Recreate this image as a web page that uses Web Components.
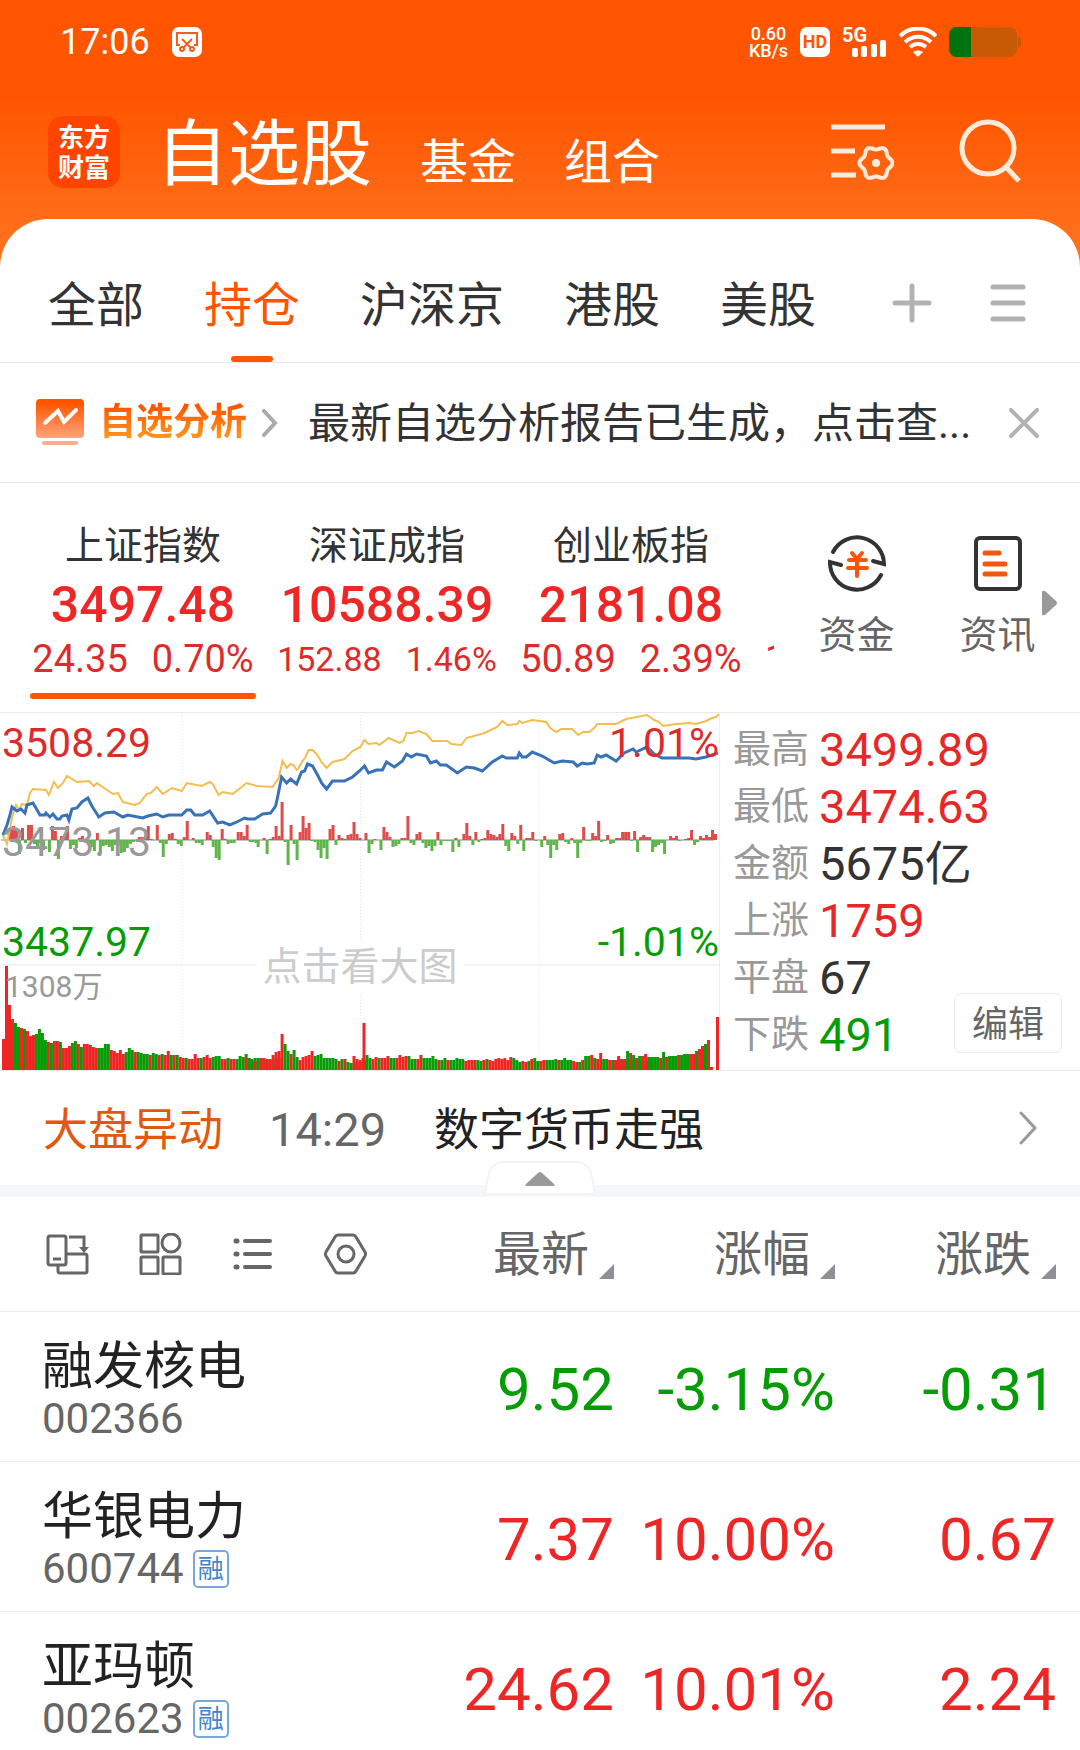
<!DOCTYPE html>
<html lang="zh-CN">
<head>
<meta charset="utf-8">
<meta name="viewport" content="width=device-width, initial-scale=1">
<title>自选股</title>
<style>
  html, body {
    margin: 0;
    height: 100%;
    background: #fff;
  }

  body {
    font-family: Roboto, "Noto Sans CJK SC", sans-serif;
    color: #333;
    --brand: #ff5500;
    --up: #ee2626;
    --down: #069c06;
    --line: #e9e9e9;
    --muted: #666;
    --faint: #999;
  }
</style>
</head>
<body>
<watch-app></watch-app>

<script>
const RESET = `
  *, *::before, *::after { box-sizing: border-box; }
  button, a {
    margin: 0;
    padding: 0;
    border: 0;
    background: none;
    font: inherit;
    color: inherit;
    text-decoration: none;
    cursor: pointer;
    white-space: nowrap;
  }
  svg { display: block; flex-shrink: 0; }
`;

class BaseElement extends HTMLElement {
  constructor() {
    super();
    this.attachShadow({ mode: 'open' });
  }

  connectedCallback() {
    this.shadowRoot.innerHTML = `<style>${RESET}${this.styles()}</style>${this.markup()}`;
  }

  styles() { return ':host { display: block; }'; }

  markup() { return '<slot></slot>'; }
}

class StatusBar extends BaseElement {
  styles() {
    return `
      :host {
        display: flex;
        align-items: center;
        justify-content: space-between;
        height: 84px;
        padding: 0 59px 0 60px;
        color: #fff;
      }
      .side { display: flex; align-items: center; }
      .left { gap: 22px; }
      .right { gap: 12px; }
      time { font-size: 36px; line-height: 44px; }
      .speed {
        font-size: 18px;
        line-height: 17px;
        font-weight: 500;
        text-align: center;
      }
      .hd {
        width: 30px;
        height: 30px;
        border-radius: 7px;
        background: #fff;
        color: var(--brand);
        font-size: 18px;
        font-weight: 700;
        line-height: 30px;
        text-align: center;
      }
      .signal { position: relative; width: 45px; height: 30px; }
      .signal span {
        position: absolute;
        top: 0;
        left: 0;
        font-size: 20px;
        font-weight: 700;
        line-height: 16px;
      }
    `;
  }

  markup() {
    return `
      <div class="side left">
        <time>17:06</time>
        <svg width="30" height="30" viewBox="0 0 30 30" fill="none" stroke="#f0601c" stroke-width="2">
          <rect width="30" height="30" rx="7" fill="#fff" stroke="none"/>
          <path d="M8 18H5V6h20v12h-3"/>
          <path d="M10 12l9 9M20 12l-9 9"/>
          <circle cx="10" cy="22" r="2"/>
          <circle cx="20" cy="22" r="2"/>
        </svg>
      </div>
      <div class="side right">
        <div class="speed">0.60<br>KB/s</div>
        <div class="hd">HD</div>
        <div class="signal">
          <span>5G</span>
          <svg width="45" height="30" viewBox="0 0 45 30" fill="#fff">
            <rect x="10" y="21" width="6" height="9" rx="2"/>
            <rect x="19" y="19" width="6" height="11" rx="2"/>
            <rect x="29" y="17" width="6" height="13" rx="2"/>
            <rect x="38" y="13" width="6" height="17" rx="2"/>
          </svg>
        </div>
        <svg width="38" height="30" viewBox="0 0 38 30" fill="none" stroke="#fff" stroke-width="4">
          <path d="M1 9C11-1 27-1 37 9"/>
          <path d="M6 15c8-7 18-7 26 0"/>
          <path d="M11 20c5-4 11-4 16 0"/>
          <path d="M19 30l-5-5c3-2 7-2 10 0z" fill="#fff" stroke="none"/>
        </svg>
        <svg width="72" height="30" viewBox="0 0 72 30">
          <rect width="68" height="30" rx="8" fill="#c85a06"/>
          <path d="M22 0H8a8 8 0 0 0-8 8v14a8 8 0 0 0 8 8h14z" fill="#00720e"/>
          <path d="M69 9q3 1 3 3v6q0 2-3 3z" fill="#c85a06"/>
        </svg>
      </div>
    `;
  }
}

class AppHeader extends BaseElement {
  styles() {
    return `
      :host {
        display: flex;
        align-items: center;
        height: 135px;
        padding: 0 59px 0 48px;
        color: #fff;
      }
      .logo {
        width: 72px;
        height: 72px;
        margin-right: 36px;
        border-radius: 15px;
        background: #ff4400;
        font-family: "Noto Sans CJK SC", sans-serif;
        font-size: 26px;
        font-weight: 700;
        line-height: 30px;
        padding-top: 5px;
        text-align: center;
      }
      nav {
        display: flex;
        align-items: baseline;
        gap: 48px;
        padding-top: 15px;
        font-size: 48px;
        line-height: 72px;
      }
      nav .current { font-size: 72px; }
      .tools {
        display: flex;
        align-items: center;
        gap: 65px;
        margin-left: auto;
      }
    `;
  }

  // six-lobed outline of the settings gear
  gearPath(cx, cy) {
    const pts = [];
    for (let i = 0; i < 72; i++) {
      const a = i * Math.PI / 36;
      const r = 15 + 1.6 * Math.cos(6 * a);
      pts.push(`${(cx + r * Math.cos(a)).toFixed(1)} ${(cy + r * Math.sin(a)).toFixed(1)}`);
    }
    return `M${pts.join('L')}Z`;
  }

  markup() {
    return `
      <div class="logo">东方<br>财富</div>
      <nav>
        <a href="#stocks" class="current">自选股</a>
        <a href="#funds">基金</a>
        <a href="#groups">组合</a>
      </nav>
      <div class="tools">
        <button aria-label="设置">
          <svg width="64" height="60" viewBox="0 0 64 60" fill="none" stroke="#ffeada" stroke-width="5">
            <path d="M1 5h54M1 29h24M1 53h25"/>
            <path d="${this.gearPath(46, 41)}" stroke-width="4"/>
            <circle cx="46" cy="41" r="4" fill="#ffeada" stroke="none"/>
          </svg>
        </button>
        <button aria-label="搜索">
          <svg width="62" height="66" viewBox="0 0 62 66" fill="none" stroke="#ffeada" stroke-width="5">
            <circle cx="29" cy="29" r="26"/>
            <path d="M47 48l13 14"/>
          </svg>
        </button>
      </div>
    `;
  }
}

class MarketTabs extends BaseElement {
  styles() {
    return `
      :host {
        display: flex;
        align-items: stretch;
        height: 144px;
        padding: 0 54px 0 48px;
        border-bottom: 1px solid var(--line);
      }
      .tabs { display: flex; gap: 60px; }
      .tabs button {
        position: relative;
        padding-top: 31px;
        font-size: 48px;
        line-height: 60px;
      }
      .tabs .active { color: var(--brand); }
      .tabs .active::after {
        content: "";
        position: absolute;
        left: 50%;
        bottom: 0;
        width: 42px;
        height: 6px;
        margin-left: -21px;
        border-radius: 3px;
        background: var(--brand);
      }
      .tools {
        display: flex;
        align-items: center;
        gap: 58px;
        margin-left: auto;
        padding-top: 24px;
      }
    `;
  }

  markup() {
    const tabs = ['全部', '持仓', '沪深京', '港股', '美股'];
    return `
      <div class="tabs">
        ${tabs.map(t => `<button class="${t === '持仓' ? 'active' : ''}">${t}</button>`).join('')}
      </div>
      <div class="tools">
        <button aria-label="添加分组">
          <svg width="40" height="40" viewBox="0 0 40 40" stroke="#b2b2b2" stroke-width="5" stroke-linecap="round">
            <path d="M3 20h34M20 3v34"/>
          </svg>
        </button>
        <button aria-label="分组管理">
          <svg width="36" height="38" viewBox="0 0 36 38" stroke="#b2b2b2" stroke-width="5" stroke-linecap="round">
            <path d="M3 3h30M3 19h30M3 35h30"/>
          </svg>
        </button>
      </div>
    `;
  }
}

class ReportNotice extends BaseElement {
  styles() {
    return `
      :host {
        display: flex;
        align-items: center;
        height: 120px;
        padding: 0 41px 0 36px;
        border-bottom: 1px solid var(--line);
      }
      .tag { display: flex; align-items: center; gap: 15px; }
      .tag b {
        font-size: 37px;
        line-height: 48px;
        background: linear-gradient(#ff5500 15%, #ff9a20 85%);
        -webkit-background-clip: text;
        background-clip: text;
        color: transparent;
      }
      p {
        flex: 1;
        min-width: 0;
        margin: 0 24px 0 30px;
        padding-top: 2px;
        font-size: 42px;
        line-height: 60px;
        white-space: nowrap;
        overflow: hidden;
      }
    `;
  }

  markup() {
    return `
      <a class="tag" href="#analysis">
        <svg width="48" height="48" viewBox="0 0 48 48" fill="none">
          <defs>
            <linearGradient id="g" x2="0" y2="1">
              <stop offset=".1" stop-color="#ff5500"/>
              <stop offset="1" stop-color="#ffa47c"/>
            </linearGradient>
          </defs>
          <rect width="48" height="39" rx="4" fill="url(#g)"/>
          <rect x="6" y="42" width="36" height="4" rx="2" fill="#ffac88"/>
          <path d="M9 24l13-12 6 11 12-12" stroke="#fff" stroke-width="4" stroke-linecap="round"/>
        </svg>
        <b>自选分析</b>
        <svg width="16" height="28" viewBox="0 0 16 28" fill="none" stroke="#aaa" stroke-width="4" stroke-linecap="round">
          <path d="M2 2l11 12L2 26"/>
        </svg>
      </a>
      <p><slot></slot></p>
      <button aria-label="关闭">
        <svg width="30" height="30" viewBox="0 0 30 30" stroke="#b2b2b2" stroke-width="4" stroke-linecap="round">
          <path d="M2 2l26 26M28 2L2 28"/>
        </svg>
      </button>
    `;
  }
}

class IndexQuote extends BaseElement {
  styles() {
    return `
      :host {
        display: block;
        flex: 0 0 244px;
        padding: 0 9px;
        text-align: center;
        white-space: nowrap;
      }
      .name { font-size: 39px; line-height: 46px; height: 46px; }
      .value {
        font-size: 50px;
        font-weight: 500;
        line-height: 72px;
        height: 72px;
        color: var(--up);
      }
      .change {
        display: flex;
        justify-content: center;
        gap: 24px;
        margin-bottom: 16px;
        font-size: 38px;
        line-height: 36px;
        color: #dd2b2b;
      }
      :host([compact]) .change { font-size: 34px; }
      :host([partial]) { padding-left: 12px; }
      :host([partial]) .change { justify-content: flex-start; }
      :host([active])::after {
        content: "";
        display: block;
        height: 6px;
        border-radius: 3px;
        background: var(--brand);
      }
    `;
  }

  markup() {
    const get = name => this.getAttribute(name) || '';
    return `
      <div class="name">${get('name')}</div>
      <div class="value">${get('value')}</div>
      <div class="change"><span>${get('change')}</span><span>${get('percent')}</span></div>
    `;
  }
}

class QuickLink extends BaseElement {
  styles() {
    return `
      :host { display: block; flex: 0 0 141px; }
      a {
        display: flex;
        flex-direction: column;
        align-items: center;
        gap: 18px;
        font-size: 38px;
        line-height: 48px;
        color: var(--muted);
      }
    `;
  }

  markup() {
    return `<a href="#${this.getAttribute('target')}"><slot name="icon"></slot><slot></slot></a>`;
  }
}

class IndexStrip extends BaseElement {
  styles() {
    return `
      :host {
        display: flex;
        height: 230px;
        border-bottom: 1px solid var(--line);
      }
      .quotes {
        flex: 1;
        min-width: 0;
        display: flex;
        overflow: hidden;
        padding: 40px 0 0 21px;
      }
      .links {
        position: relative;
        display: flex;
        width: 306px;
        padding: 50px 0 0 12px;
      }
      .more {
        position: absolute;
        top: 107px;
        right: 23px;
      }
    `;
  }

  markup() {
    return `
      <div class="quotes">
        <index-quote active name="上证指数" value="3497.48" change="24.35" percent="0.70%"></index-quote>
        <index-quote compact name="深证成指" value="10588.39" change="152.88" percent="1.46%"></index-quote>
        <index-quote name="创业板指" value="2181.08" change="50.89" percent="2.39%"></index-quote>
        <index-quote partial change="1"></index-quote>
      </div>
      <div class="links">
        <quick-link target="capital">
          <svg slot="icon" width="60" height="60" viewBox="0 0 60 60" fill="none" stroke="#333" stroke-width="4" stroke-linecap="round">
            <path d="M6 19A27 27 0 0 1 57 31l-11-3"/>
            <path d="M54 42A27 27 0 0 1 3 29l11 3"/>
            <path d="M25 20l5 6 5-6M22 27h17M21 35h19M30 27v16" stroke="#ff5500"/>
          </svg>
          资金
        </quick-link>
        <quick-link target="news">
          <svg slot="icon" width="60" height="60" viewBox="0 0 60 60" fill="none" stroke="#333" stroke-width="4" stroke-linecap="round">
            <rect x="8" y="5" width="44" height="51" rx="4"/>
            <path d="M17 20h14M17 31h20M17 41h20" stroke="#f5560e" stroke-width="5"/>
          </svg>
          资讯
        </quick-link>
        <button class="more" aria-label="更多">
          <svg width="16" height="26" viewBox="0 0 16 26" fill="#999">
            <path d="M1 2q0-2 3-1l11 10q2 2 0 4L4 25q-3 1-3-1z"/>
          </svg>
        </button>
      </div>
    `;
  }
}

const PRICE = `3,122 7,112 10,102 12,94 17,98 21,96 25,100 27,92 33,90 36,95 40,102 45,102 46,100 50,104
  53,101 57,106 60,106 62,103 67,102 69,107 72,96 77,95 82,89 88,85 92,93 99,104 105,100 114,99 123,104
  128,102 143,105 148,103 157,101 163,104 169,102 182,102 187,97 191,97 195,102 203,102 210,98 218,110
  223,109 230,112 235,110 245,105 248,106 255,106 263,101 271,100 276,93 278,84 282,64 287,70 291,66
  297,71 302,59 305,58 308,51 313,53 318,62 322,70 327,76 333,68 345,68 353,64 360,58 365,53 369,60
  377,57 383,57 387,49 395,54 403,48 407,41 412,44 417,41 427,43 431,50 437,48 441,52 447,52 458,60
  467,54 475,55 483,58 493,49 503,43 507,45 518,45 520,40 523,44 527,44 533,39 543,43 555,50 563,48
  574,49 578,53 583,50 588,51 595,50 598,42 602,44 607,42 617,48 625,40 634,36 637,39 648,34 655,41
  663,45 690,45 697,46 707,44 719,40`;

const AVERAGE = `3,122 7,131 12,105 16,92 19,97 22,91 27,92 30,80 33,76 46,77 49,82 54,69 58,75 63,70 67,63
  77,69 89,68 94,73 97,70 113,81 118,80 123,89 135,92 140,90 147,81 151,80 157,74 163,81 172,75 182,78
  187,70 202,73 210,69 213,71 219,82 223,79 233,81 247,70 257,73 273,74 279,65 283,48 287,55 291,51
  294,52 297,57 299,55 303,48 306,44 309,37 313,37 317,41 322,49 327,55 333,49 345,46 353,38 361,34
  365,27 369,31 377,30 380,32 389,25 400,30 404,28 407,20 413,20 419,18 427,21 433,28 448,28 452,31
  462,32 467,25 485,20 498,14 503,8 508,12 518,11 520,8 523,10 533,7 547,9 551,15 557,19 562,16 573,16
  579,22 584,19 590,19 595,15 598,11 617,11 627,6 648,2 655,7 660,9 664,13 677,11 690,10 697,11 707,8
  713,5 717,4 720,1`;

// x:height, positive bars rise above the zero line
const MOMENTUM = `9:10 12:14 15:12 18:-14 21:12 24:-3 27:15 30:15 33:-4 36:-8 39:-3 42:-10 48:-12 51:14 54:9
  57:-19 60:4 63:3 66:14 69:-9 72:-5 75:-8 78:2 81:4 84:-2 87:-3 90:-7 93:-11 96:7 99:-13 102:-6 105:-5
  108:-7 111:-11 114:-5 117:-6 120:-13 123:-12 126:-8 129:-4 132:-2 135:-1 138:3 141:3 144:3 147:14 150:1
  156:15 159:-3 162:-17 165:-4 168:6 171:7 174:1 177:-4 180:-6 183:3 186:19 192:2 195:-3 198:-3 201:-5
  206:8 209:5 212:-7 215:-18 218:-20 221:11 224:1 227:-4 230:-3 233:-3 237:8 240:8 243:4 246:15 249:-2
  252:-2 255:-3 257:-7 263:2 266:-14 269:1 272:3 275:14 278:4 281:38 284:-2 287:-25 290:15 293:-4 296:-20
  299:8 302:24 305:12 308:17 311:-1 314:-2 317:-10 320:-18 323:-8 326:-19 329:11 332:15 335:-5 338:5
  341:2 344:1 347:5 350:6 353:18 356:6 359:2 365:7 368:-13 371:-4 374:1 380:-10 383:13 386:8 389:3 392:-7
  395:-6 398:-4 401:2 404:2 407:24 410:-3 413:-5 416:6 419:8 422:-3 425:-8 428:-6 431:-11 434:-6 437:8
  440:-5 443:-1 446:-1 449:-1 452:-12 455:2 458:-7 463:6 466:17 469:4 472:-5 475:8 478:-2 481:1 484:2
  487:10 490:6 493:5 496:3 499:6 502:16 505:-6 508:-11 511:7 514:4 517:-4 520:15 523:-11 526:2 529:2
  532:8 535:-1 541:-7 544:4 547:-5 550:-18 553:-5 556:-10 559:6 562:7 565:-2 568:-4 571:2 574:-3 577:-18
  580:-3 583:13 586:-1 589:-1 592:7 595:4 598:19 601:-2 604:-1 607:5 610:-4 613:-3 616:2 619:2 622:8
  625:8 628:8 631:-1 634:9 637:-12 640:3 643:5 646:3 649:3 652:-12 655:-7 658:-5 661:-3 664:-14 670:4
  673:2 676:4 679:-1 685:1 688:2 691:10 694:-5 697:-2 700:4 703:2 706:5 709:3 712:10 715:6`;

// runs of volume bars: start x, then one entry per minute (r = up, g = down)
const VOLUME = [
  [3, `r31 r104 r65 r51 g47 g43 r42 g41 r39 r34 r35 g36 g41 g37 g30 r28 g27 r29 r29 g28 r22 r22 r24 g27 g29
    r26 g23 r26 r26 r25 r23 r22 g22 g22 g26 g26 r20 r19 r17 r20 r16 g18 g22 g20 r18 g18 g17 g16 g16 r15 g17
    g16 r15 g16 r15 r19 g15 r15 g15 r13 r12 g12 r11 r11 r16 r12 g12 r13 r15 r12 g13 g14 g14 r11 r11 g12 r11
    r11 g11 g14 g13 g16 r12 g11 g12 g12 g11 r10 r10 r10 r9 r10`],
  [246, 'r12 g12 g9 r9 g9 r12 r12 r11 r11 r15 g12 r13'],
  [276, 'r18 r19 r36 g26 g19 r16 g20 g13 r10 r13 r14 r15 r19 g14 g15 g16 g12 g12 g12 g12 g11 r9 g11 r11 g8 g7 g7 r7 r8 r8 r10'],
  [354, 'r14 r11 r10 r12'],
  [364, `r47 g15 g12 r11 r13 g12 r12 r12 r14 g12 g12 r12 r15 r13 r14 g14 g11 g11 r11 r15 g12 g12 g12 g14 g11
    r10 g10 g12 r10 g10 g10 g12 g11 g11 r9 r10 r10 r10 g10 g9 r10 g11 r10 r9 r11 r12 r11 r12 r10 r13 g12 g10
    g8 r9 r8 g9 r11 g12 g9 r9 r10 g10 g10 g10 g11 r10 g10 g12 g10 g10 r9 r8 g8 r10 g14 g14 r15 g12 r11 r17
    g11 g11 r10 g10 r10 r14 g11 r10 g9 g10 g10 g10 g9 g9 r9 r9 r10`],
  [616, 'r10 r11 r11 r11'],
  [628, 'g19 r17 g15 r12 g14 r14 r16 g13 g13 g13 g13 r12 g18 r13 g14 g14 g14 r15 g15 g16 g16 r16 r16 g19 r21 g19 r19 g22'],
  [703, 'r24 g26 r30 r3'],
  [718, 'r53'],
];

class MinuteChart extends BaseElement {
  styles() {
    return `
      :host { display: block; position: relative; border-right: 1px solid #eee; }
      svg { width: 100%; height: 357px; }
      .label {
        position: absolute;
        left: 2px;
        font-size: 41px;
        line-height: 48px;
      }
      .right { left: auto; right: 0; }
      .top { top: 6px; }
      .mid { top: 105px; color: var(--faint); }
      .low { top: 205px; }
      .up { color: #dd2b2b; }
      .down { color: var(--down); }
      .volume { top: 250px; left: 5px; font-size: 30px; line-height: 48px; color: var(--faint); }
      .hint {
        position: absolute;
        top: 229px;
        left: 50%;
        margin-left: -103px;
        padding: 0 6px;
        background: #fff;
        font-size: 39px;
        line-height: 50px;
        color: #ccc;
      }
    `;
  }

  momentumBars() {
    return MOMENTUM.trim().split(/\s+/).map(item => {
      const [x, h] = item.split(':').map(Number);
      const y = h > 0 ? 127 - h : 127;
      return `<rect x="${x}" y="${y}" width="3" height="${Math.abs(h)}" fill="${h > 0 ? '#e04b4b' : '#5fb54a'}"/>`;
    }).join('');
  }

  volumeBars() {
    return VOLUME.map(([start, run]) => run.trim().split(/\s+/).map((item, i) => {
      const h = Number(item.slice(1));
      const fill = item[0] === 'r' ? '#ef2525' : '#069c06';
      return `<rect x="${start + i * 3 - 1}" y="${357 - h}" width="3" height="${h}" fill="${fill}"/>`;
    }).join('')).join('');
  }

  markup() {
    return `
      <svg viewBox="0 0 720 357" preserveAspectRatio="none" fill="none">
        <path d="M182 2v355M361 2v355M540 2v355" stroke="#e4e4e4" stroke-dasharray="1 2"/>
        <path d="M1 252h719" stroke="#e6e6e6"/>
        <path d="M1 127h714" stroke="#888"/>
        ${this.momentumBars()}
        ${this.volumeBars()}
        <polyline points="${AVERAGE}" stroke="#f3bd50" stroke-width="2"/>
        <polyline points="${PRICE}" stroke="#3972b8" stroke-width="3"/>
      </svg>
      <span class="label top up">3508.29</span>
      <span class="label top right up">1.01%</span>
      <span class="label mid">3473.13</span>
      <span class="label low down">3437.97</span>
      <span class="label low right down">-1.01%</span>
      <span class="label volume">1308万</span>
      <button class="hint">点击看大图</button>
    `;
  }
}

class MarketStats extends BaseElement {
  styles() {
    return `
      :host { display: block; position: relative; padding: 8px 0 7px 13px; }
      dl { margin: 0; }
      div { display: flex; align-items: center; gap: 10px; height: 57px; }
      dt { font-size: 38px; line-height: 57px; color: var(--faint); }
      dd { margin: 0; font-size: 47px; line-height: 57px; }
      .up { color: #e62828; }
      .down { color: var(--down); }
      button {
        position: absolute;
        right: 18px;
        bottom: 17px;
        padding: 5px 17px 0;
        border: 1px solid #eaeaea;
        border-radius: 7px;
        background: #fff;
        font-size: 36px;
        line-height: 53px;
        color: var(--muted);
      }
    `;
  }

  markup() {
    const stats = [
      ['最高', '3499.89', 'up'],
      ['最低', '3474.63', 'up'],
      ['金额', '5675亿', ''],
      ['上涨', '1759', 'up'],
      ['平盘', '67', ''],
      ['下跌', '491', 'down'],
    ];
    return `
      <dl>
        ${stats.map(([k, v, c]) => `<div><dt>${k}</dt><dd class="${c}">${v}</dd></div>`).join('')}
      </dl>
      <button>编辑</button>
    `;
  }
}

class MoveTicker extends BaseElement {
  styles() {
    return `
      :host {
        display: block;
        position: relative;
        border-top: 1px solid var(--line);
        border-bottom: 12px solid #f5f6f9;
      }
      .row {
        display: flex;
        align-items: center;
        height: 114px;
        padding: 0 43px;
        font-size: 45px;
        line-height: 60px;
        color: #222;
      }
      .row span { padding-top: 5px; }
      .kind { color: #e0590e; }
      time { margin: 0 48px 0 46px; font-size: 47px; padding-top: 3px; color: var(--muted); }
      .row svg { margin-left: auto; }
      .fold {
        position: absolute;
        left: 50%;
        bottom: -10px;
        margin-left: -56px;
      }
    `;
  }

  markup() {
    return `
      <a class="row" href="#moves">
        <span class="kind">大盘异动</span>
        <time>14:29</time>
        <span><slot></slot></span>
        <svg width="18" height="34" viewBox="0 0 18 34" fill="none" stroke="#999" stroke-width="3" stroke-linecap="round">
          <path d="M2 2l14 15L2 32"/>
        </svg>
      </a>
      <button class="fold" aria-label="收起">
        <svg width="112" height="34" viewBox="0 0 112 34">
          <path d="M1 33L4 16Q7 1 21 1h70q14 0 17 15l3 17z" fill="#fff" stroke="#f3f3f3" stroke-width="2"/>
          <path d="M42 23q-2 2 1 2h26q3 0 1-2L58 12q-2-2-4 0z" fill="#999"/>
        </svg>
      </button>
    `;
  }
}

class StockTable extends BaseElement {
  constructor() {
    super();
    this._rows = [
      { name: '融发核电', code: '002366', price: '9.52', percent: '-3.15%', change: '-0.31' },
      { name: '华银电力', code: '600744', margin: true, price: '7.37', percent: '10.00%', change: '0.67' },
      { name: '亚玛顿', code: '002623', margin: true, price: '24.62', percent: '10.01%', change: '2.24' },
    ];
  }

  styles() {
    return `
      :host { display: block; overflow: hidden; }
      table { width: 100%; border-collapse: collapse; table-layout: fixed; }
      .num { width: 221px; }
      .edge { width: 24px; }
      th, td { padding: 0; font-weight: 400; text-align: right; white-space: nowrap; }
      th:first-child { text-align: left; }
      tr { border-bottom: 1px solid #ebebeb; }
      thead tr { height: 114px; }
      tbody tr { height: 150px; }
      .views { display: flex; gap: 49px; padding-left: 45px; }
      .sort {
        display: inline-flex;
        align-items: flex-end;
        gap: 10px;
        padding-top: 2px;
        font-size: 48px;
        line-height: 54px;
        color: var(--muted);
      }
      .sort svg { margin-bottom: 3px; }
      .stock { padding: 5px 0 0 42px; }
      .name { font-size: 51px; line-height: 60px; color: #222; }
      .code {
        display: flex;
        align-items: center;
        gap: 9px;
        font-size: 42px;
        line-height: 44px;
        color: var(--muted);
      }
      .badge {
        width: 36px;
        height: 38px;
        border: 2px solid #76a6dc;
        border-radius: 5px;
        font-size: 26px;
        line-height: 34px;
        text-align: center;
        color: #4285c8;
      }
      td { font-size: 60px; line-height: 72px; padding-top: 8px; color: var(--up); }
      .down td { color: var(--down); }
    `;
  }

  markup() {
    const corner = '<svg width="15" height="15" viewBox="0 0 15 15"><path d="M15 0v15H0z" fill="#8f8f97"/></svg>';
    return `
      <table>
        <colgroup><col><col class="num"><col class="num"><col class="num"><col class="edge"></colgroup>
        <thead>
          <tr>
            <th>
              <div class="views">
                <button aria-label="横屏">
                  <svg width="44" height="42" viewBox="0 0 44 42" fill="none" stroke="#666" stroke-width="3">
                    <rect x="3" y="3" width="18" height="29" rx="2"/>
                    <path d="M8 26h8M24 4h15v12"/>
                    <path d="M34 14h10l-5 6z" fill="#666" stroke="none"/>
                    <path d="M22 21h18q2 0 2 2v15q0 2-2 2H15q-2 0-2-2v-6"/>
                  </svg>
                </button>
                <button aria-label="宫格">
                  <svg width="44" height="42" viewBox="0 0 44 42" fill="none" stroke="#666" stroke-width="3">
                    <rect x="3" y="2" width="17" height="17" rx="1"/>
                    <circle cx="33" cy="10" r="9"/>
                    <rect x="3" y="24" width="17" height="17" rx="1"/>
                    <rect x="25" y="24" width="17" height="17" rx="1"/>
                  </svg>
                </button>
                <button aria-label="列表">
                  <svg width="44" height="42" viewBox="0 0 44 42" stroke="#666" stroke-width="4" stroke-linecap="round">
                    <path d="M14 8h25M14 21h25M14 34h25"/>
                    <path d="M5 8h1M5 21h1M5 34h1" stroke-width="5"/>
                  </svg>
                </button>
                <button aria-label="设置">
                  <svg width="44" height="42" viewBox="0 0 44 42" fill="none" stroke="#666" stroke-width="3">
                    <path d="M14 2h15q2 0 3 2l9 15q1 2 0 4l-9 15q-1 2-3 2H14q-2 0-3-2L2 23q-1-2 0-4l9-15q1-2 3-2z"/>
                    <circle cx="22" cy="21" r="8"/>
                  </svg>
                </button>
              </div>
            </th>
            ${['最新', '涨幅', '涨跌'].map(t => `<th><button class="sort">${t}${corner}</button></th>`).join('')}
            <th></th>
          </tr>
        </thead>
        <tbody>
          ${this._rows.map(row => `
            <tr class="${row.change.startsWith('-') ? 'down' : 'up'}">
              <th class="stock" scope="row">
                <div class="name">${row.name}</div>
                <div class="code">${row.code}${row.margin ? '<span class="badge">融</span>' : ''}</div>
              </th>
              <td>${row.price}</td>
              <td>${row.percent}</td>
              <td>${row.change}</td>
              <td></td>
            </tr>
          `).join('')}
        </tbody>
      </table>
    `;
  }
}

class WatchApp extends BaseElement {
  styles() {
    return `
      :host {
        display: flex;
        flex-direction: column;
        height: 100vh;
        overflow: hidden;
        background: linear-gradient(#ff5500 96px, #ff701c 240px);
      }
      main {
        flex: 1;
        min-height: 0;
        display: flex;
        flex-direction: column;
        border-radius: 48px 48px 0 0;
        background: #fff;
      }
      main > * { flex-shrink: 0; }
      .overview { display: grid; grid-template-columns: 2fr 1fr; }
      main > stock-table { flex: 1; min-height: 0; }
    `;
  }

  markup() {
    return `
      <status-bar></status-bar>
      <app-header></app-header>
      <main>
        <market-tabs></market-tabs>
        <report-notice>最新自选分析报告已生成，点击查...</report-notice>
        <index-strip></index-strip>
        <div class="overview">
          <minute-chart></minute-chart>
          <market-stats></market-stats>
        </div>
        <move-ticker>数字货币走强</move-ticker>
        <stock-table></stock-table>
      </main>
    `;
  }
}

customElements.define('status-bar', StatusBar);
customElements.define('app-header', AppHeader);
customElements.define('market-tabs', MarketTabs);
customElements.define('report-notice', ReportNotice);
customElements.define('index-quote', IndexQuote);
customElements.define('quick-link', QuickLink);
customElements.define('index-strip', IndexStrip);
customElements.define('minute-chart', MinuteChart);
customElements.define('market-stats', MarketStats);
customElements.define('move-ticker', MoveTicker);
customElements.define('stock-table', StockTable);
customElements.define('watch-app', WatchApp);
</script>
</body>
</html>
